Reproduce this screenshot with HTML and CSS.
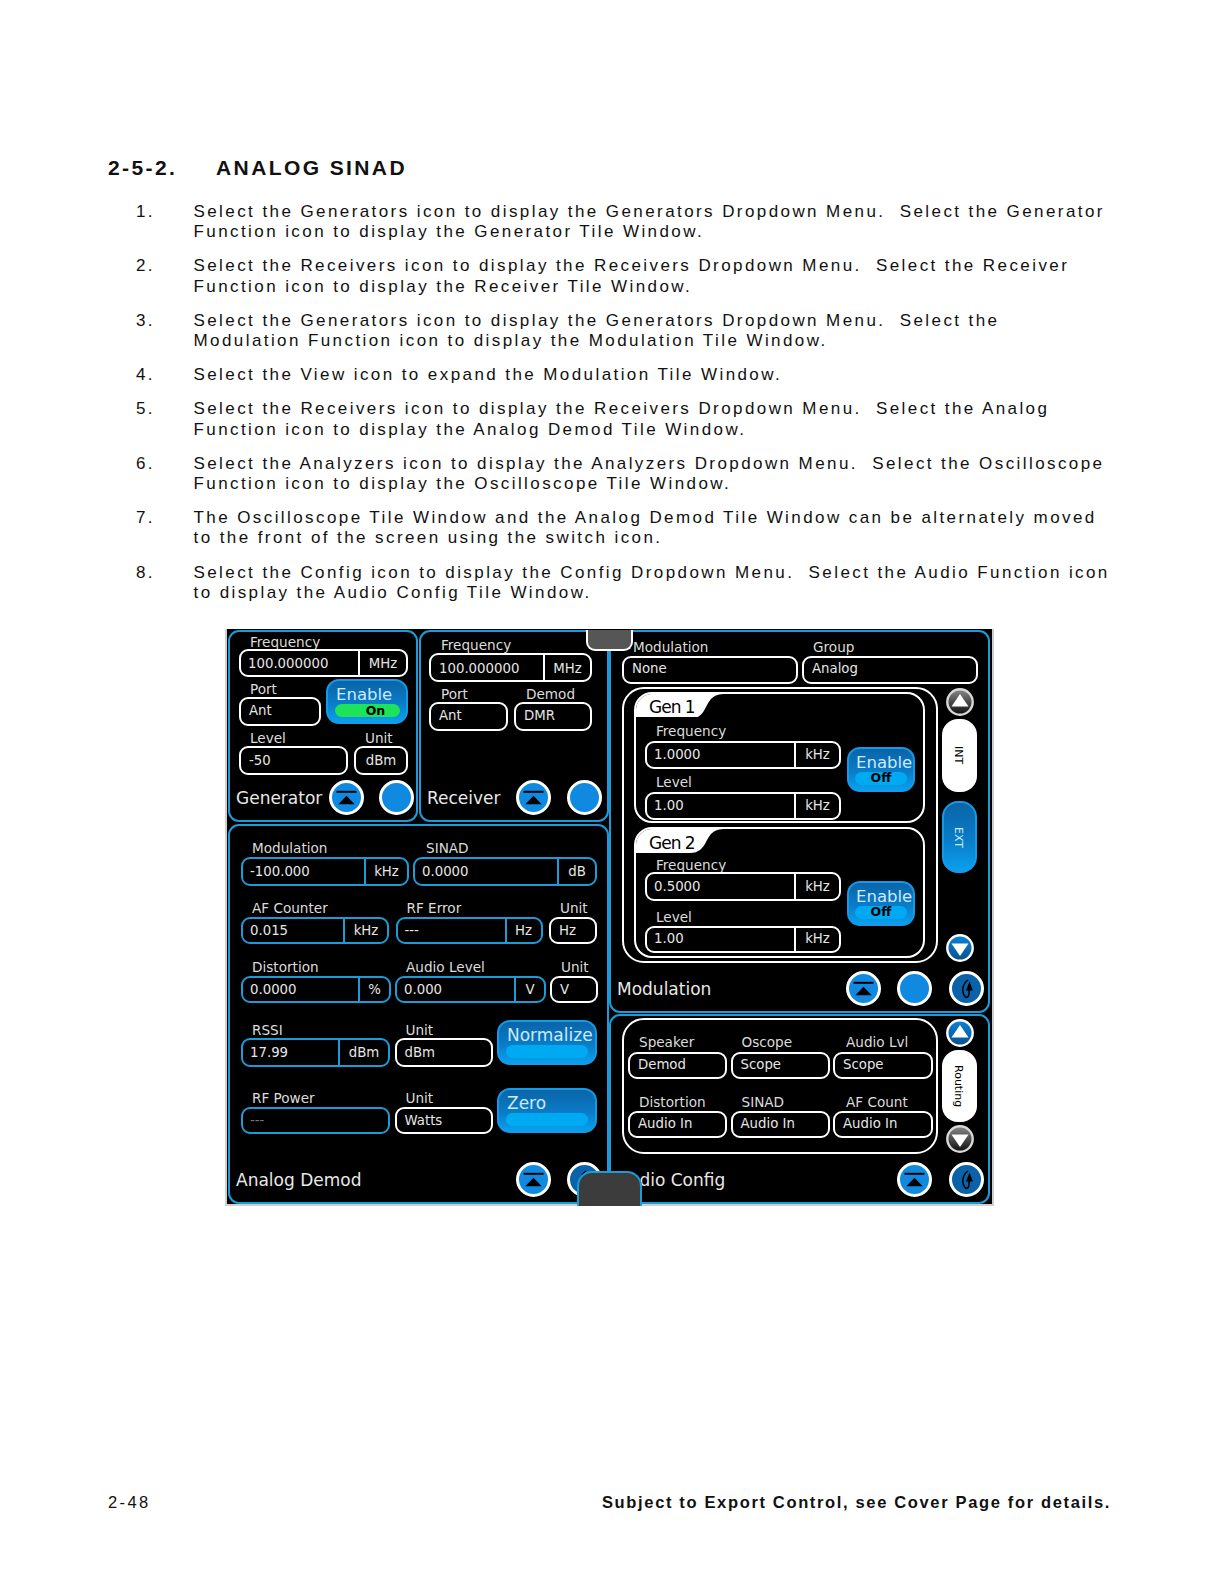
FILE: index.html
```html
<!DOCTYPE html>
<html lang="en">
<head>
<meta charset="utf-8">
<title>Analog SINAD</title>
<link rel="stylesheet" href="styles.css">
</head>
<body>
<svg class="defs" width="0" height="0" aria-hidden="true">
  <defs>
    <linearGradient id="gBlue" x1="0" y1="0" x2="0" y2="1"><stop offset="0" stop-color="#0a84d8"/><stop offset="1" stop-color="#06508c"/></linearGradient>
    <linearGradient id="gGrey" x1="0" y1="0" x2="0" y2="1"><stop offset="0" stop-color="#8a8a8a"/><stop offset="1" stop-color="#0c0c0c"/></linearGradient>
    <symbol id="iTop" viewBox="0 0 35 35"><circle cx="17.5" cy="17.5" r="16" fill="#0f8ae0" stroke="#fff" stroke-width="3"/><path d="M7.500 11.800h20" stroke="#000" stroke-width="2"/><path d="M17.500 15.800L25.700 24.200H9.300z" fill="#000"/></symbol>
    <symbol id="iDot" viewBox="0 0 35 35"><circle cx="17.5" cy="17.5" r="16" fill="#0f8ae0" stroke="#fff" stroke-width="3"/></symbol>
    <symbol id="iSwitch" viewBox="0 0 35 35"><circle cx="17.5" cy="17.5" r="16" fill="#0a62aa" stroke="#fff" stroke-width="3"/><path d="M19 9C13 13 12 22 17 26.500C19.500 26.500 20.500 24 20 19" fill="none" stroke="#000" stroke-width="1.500"/><path d="M20.500 10.500L24 19.500H17z" fill="#000"/></symbol>
    <symbol id="iUpGrey" viewBox="0 0 28 28"><circle cx="14" cy="14" r="12.700" fill="url(#gGrey)" stroke="#d8d8d8" stroke-width="2.400"/><path d="M14 6L22.500 18.500H5.500z" fill="#fff"/></symbol>
    <symbol id="iUpBlue" viewBox="0 0 28 28"><circle cx="14" cy="14" r="12.700" fill="url(#gBlue)" stroke="#fff" stroke-width="2.400"/><path d="M14 6L22.500 18.500H5.500z" fill="#fff"/></symbol>
    <symbol id="iDownGrey" viewBox="0 0 28 28"><circle cx="14" cy="14" r="12.700" fill="url(#gGrey)" stroke="#d8d8d8" stroke-width="2.400"/><path d="M14 22L22.500 9.500H5.500z" fill="#fff"/></symbol>
    <symbol id="iDownBlue" viewBox="0 0 28 28"><circle cx="14" cy="14" r="12.700" fill="url(#gBlue)" stroke="#fff" stroke-width="2.400"/><path d="M14 22L22.500 9.500H5.500z" fill="#fff"/></symbol>
  </defs>
</svg>

<main class="page">
  <h1 class="heading"><span class="heading-num">2-5-2.</span><span>ANALOG SINAD</span></h1>

  <ol class="steps">
    <li class="step"><span class="step-num">1.</span><p>Select the Generators icon to display the Generators Dropdown Menu.&nbsp; Select the Generator<br>Function icon to display the Generator Tile Window.</p></li>
    <li class="step"><span class="step-num">2.</span><p>Select the Receivers icon to display the Receivers Dropdown Menu.&nbsp; Select the Receiver<br>Function icon to display the Receiver Tile Window.</p></li>
    <li class="step"><span class="step-num">3.</span><p>Select the Generators icon to display the Generators Dropdown Menu.&nbsp; Select the<br>Modulation Function icon to display the Modulation Tile Window.</p></li>
    <li class="step"><span class="step-num">4.</span><p>Select the View icon to expand the Modulation Tile Window.</p></li>
    <li class="step"><span class="step-num">5.</span><p>Select the Receivers icon to display the Receivers Dropdown Menu.&nbsp; Select the Analog<br>Function icon to display the Analog Demod Tile Window.</p></li>
    <li class="step"><span class="step-num">6.</span><p>Select the Analyzers icon to display the Analyzers Dropdown Menu.&nbsp; Select the Oscilloscope<br>Function icon to display the Oscilloscope Tile Window.</p></li>
    <li class="step"><span class="step-num">7.</span><p>The Oscilloscope Tile Window and the Analog Demod Tile Window can be alternately moved<br>to the front of the screen using the switch icon.</p></li>
    <li class="step"><span class="step-num">8.</span><p>Select the Config icon to display the Config Dropdown Menu.&nbsp; Select the Audio Function icon<br>to display the Audio Config Tile Window.</p></li>
  </ol>

  <figure class="shot">
    <div class="col-left">
      <div class="col-left-top">
        <!-- Generator -->
        <section class="panel panel-gen">
          <div class="row r-gen-1 g6">
            <div class="fld"><span class="lbl">Frequency</span><div class="box"><span class="v">100.000000</span><span class="u u48">MHz</span></div></div>
          </div>
          <div class="row r-gen-2 g7">
            <div class="fld"><span class="lbl">Port</span><div class="box h29"><span class="v">Ant</span></div></div>
            <div class="btn btn-gen"><span class="btn-t">Enable</span><span class="pill pill-on"><b class="pill-t">On</b></span></div>
          </div>
          <div class="row r-gen-3 g7">
            <div class="fld"><span class="lbl">Level</span><div class="box h29"><span class="v">-50</span></div></div>
            <div class="fld"><span class="lbl">Unit</span><div class="box h29"><span class="c">dBm</span></div></div>
          </div>
          <div class="foot foot-gen">
            <span class="title">Generator</span>
            <svg class="ic"><use href="#iTop"/></svg>
            <svg class="ic ic-gap15"><use href="#iDot"/></svg>
          </div>
        </section>
        <!-- Receiver -->
        <section class="panel panel-rec">
          <div class="row r-rec-1 g7">
            <div class="fld"><span class="lbl">Frequency</span><div class="box h29"><span class="v">100.000000</span><span class="u u47">MHz</span></div></div>
          </div>
          <div class="row r-rec-2 g7">
            <div class="fld"><span class="lbl">Port</span><div class="box h29"><span class="v">Ant</span></div></div>
            <div class="fld"><span class="lbl">Demod</span><div class="box h29"><span class="v">DMR</span></div></div>
          </div>
          <div class="foot foot-rec">
            <span class="title">Receiver</span>
            <svg class="ic"><use href="#iTop"/></svg>
            <svg class="ic ic-gap16"><use href="#iDot"/></svg>
          </div>
        </section>
      </div>
      <!-- Analog Demod -->
      <section class="panel panel-demod">
        <div class="row r-dem-1 g8">
          <div class="fld"><span class="lbl">Modulation</span><div class="box blue h29"><span class="v">-100.000</span><span class="u u43">kHz</span></div></div>
          <div class="fld"><span class="lbl in13">SINAD</span><div class="box blue h29"><span class="v">0.0000</span><span class="u u38">dB</span></div></div>
        </div>
        <div class="row r-dem-2 g8">
          <div class="fld"><span class="lbl">AF Counter</span><div class="box blue h27"><span class="v">0.015</span><span class="u u44">kHz</span></div></div>
          <div class="fld"><span class="lbl">RF Error</span><div class="box blue h27"><span class="v">---</span><span class="u u36">Hz</span></div></div>
          <div class="fld"><span class="lbl">Unit</span><div class="box h27"><span class="v">Hz</span></div></div>
        </div>
        <div class="row r-dem-3 g8">
          <div class="fld"><span class="lbl">Distortion</span><div class="box blue h27"><span class="v">0.0000</span><span class="u u31">%</span></div></div>
          <div class="fld"><span class="lbl">Audio Level</span><div class="box blue h27"><span class="v">0.000</span><span class="u u30">V</span></div></div>
          <div class="fld"><span class="lbl">Unit</span><div class="box h27"><span class="v">V</span></div></div>
        </div>
        <div class="row r-dem-4 g7">
          <div class="fld"><span class="lbl">RSSI</span><div class="box blue h29"><span class="v">17.99</span><span class="u u50">dBm</span></div></div>
          <div class="fld"><span class="lbl">Unit</span><div class="box h29"><span class="v">dBm</span></div></div>
          <div class="btn btn-dem"><span class="btn-t btn-t-lg">Normalize</span><span class="pill pill-off pill-dem"></span></div>
        </div>
        <div class="row r-dem-5 g8">
          <div class="fld"><span class="lbl">RF Power</span><div class="box blue h27"><span class="v dim">---</span></div></div>
          <div class="fld"><span class="lbl">Unit</span><div class="box h27"><span class="v">Watts</span></div></div>
          <div class="btn btn-dem"><span class="btn-t btn-t-lg">Zero</span><span class="pill pill-off pill-dem"></span></div>
        </div>
        <div class="foot foot-demod">
          <span class="title">Analog Demod</span>
          <svg class="ic"><use href="#iTop"/></svg>
          <svg class="ic ic-gap16"><use href="#iSwitch"/></svg>
        </div>
      </section>
    </div>

    <div class="col-right">
      <!-- Modulation -->
      <section class="panel panel-mod">
        <div class="row r-mod-1 g8">
          <div class="fld"><span class="lbl">Modulation</span><div class="box"><span class="v">None</span></div></div>
          <div class="fld"><span class="lbl">Group</span><div class="box"><span class="v">Analog</span></div></div>
        </div>
        <div class="body-mod">
          <div class="frame frame-mod">
            <div class="gen gen-1">
              <div class="gen-tab"><span>Gen 1</span></div>
              <div class="gen-grid">
                <div class="gen-fields">
                  <div class="fld"><span class="lbl">Frequency</span><div class="box"><span class="v">1.0000</span><span class="u u45">kHz</span></div></div>
                  <div class="fld fld-next"><span class="lbl">Level</span><div class="box"><span class="v">1.00</span><span class="u u45">kHz</span></div></div>
                </div>
                <div class="btn btn-mod"><span class="btn-t">Enable</span><span class="pill pill-off pill-mod"><b class="pill-t pill-t-up">Off</b></span></div>
              </div>
            </div>
            <div class="gen gen-2">
              <div class="gen-tab"><span>Gen 2</span></div>
              <div class="gen-grid">
                <div class="gen-fields">
                  <div class="fld g6"><span class="lbl">Frequency</span><div class="box h29"><span class="v">0.5000</span><span class="u u45">kHz</span></div></div>
                  <div class="fld fld-next g8"><span class="lbl">Level</span><div class="box h27"><span class="v">1.00</span><span class="u u45">kHz</span></div></div>
                </div>
                <div class="btn btn-mod"><span class="btn-t">Enable</span><span class="pill pill-off pill-mod"><b class="pill-t pill-t-up">Off</b></span></div>
              </div>
            </div>
          </div>
          <div class="side side-mod">
            <svg class="arrow"><use href="#iUpGrey"/></svg>
            <div class="tabv tabv-on tabv-int"><span>INT</span></div>
            <div class="tabv tabv-off tabv-ext"><span>EXT</span></div>
            <svg class="arrow arrow-end"><use href="#iDownBlue"/></svg>
          </div>
        </div>
        <div class="foot foot-mod">
          <span class="title">Modulation</span>
          <svg class="ic"><use href="#iTop"/></svg>
          <svg class="ic ic-gap16"><use href="#iDot"/></svg>
          <svg class="ic ic-gap17"><use href="#iSwitch"/></svg>
        </div>
      </section>
      <!-- Audio Config -->
      <section class="panel panel-audio">
        <div class="body-audio">
          <div class="frame frame-audio">
            <div class="row r-aud r-aud-1">
              <div class="fld"><span class="lbl">Speaker</span><div class="box h27"><span class="v">Demod</span></div></div>
              <div class="fld"><span class="lbl">Oscope</span><div class="box h27"><span class="v">Scope</span></div></div>
              <div class="fld"><span class="lbl in13">Audio Lvl</span><div class="box h27"><span class="v">Scope</span></div></div>
            </div>
            <div class="row r-aud r-aud-2">
              <div class="fld"><span class="lbl">Distortion</span><div class="box h27"><span class="v">Audio In</span></div></div>
              <div class="fld"><span class="lbl">SINAD</span><div class="box h27"><span class="v">Audio In</span></div></div>
              <div class="fld"><span class="lbl in13">AF Count</span><div class="box h27"><span class="v">Audio In</span></div></div>
            </div>
          </div>
          <div class="side side-audio">
            <svg class="arrow"><use href="#iUpBlue"/></svg>
            <div class="tabv tabv-on tabv-routing"><span>Routing</span></div>
            <svg class="arrow arrow-next"><use href="#iDownGrey"/></svg>
          </div>
        </div>
        <div class="foot foot-audio">
          <span class="title">Audio Config</span>
          <svg class="ic"><use href="#iTop"/></svg>
          <svg class="ic ic-gap17"><use href="#iSwitch"/></svg>
        </div>
      </section>
    </div>

    <div class="handle handle-top"></div>
    <div class="handle handle-bottom"></div>
  </figure>

  <footer class="pagefoot">
    <span class="pagefoot-num">2-48</span>
    <b class="pagefoot-note">Subject to Export Control, see Cover Page for details.</b>
  </footer>
</main>
</body>
</html>
```

FILE: styles.css
```css
* { box-sizing: border-box; }
html, body { margin: 0; padding: 0; background: #fff; }
.defs { position: absolute; }
.page {
  width: 1219px;
  height: 1582px;
  padding: 156px 0 0 107px;
  font-family: "Liberation Sans", Arial, sans-serif;
  color: #111;
}

/* Document text */
.heading {
  display: flex;
  margin: 0 0 0 1px;
  font-size: 21px;
  line-height: 24px;
  letter-spacing: 2.4px;
  font-weight: 700;
}
.heading-num { width: 108px; }
.steps {
  list-style: none;
  margin: 22px 0 0;
  padding: 0 0 0 29px;
  display: flex;
  flex-direction: column;
  gap: 14px;
  font-size: 17px;
  line-height: 20.2px;
  letter-spacing: 2.415px;
}
.step { display: flex; }
.step p { margin: 0; white-space: nowrap; }
.step-num { width: 57.5px; flex: none; }
.pagefoot {
  display: flex;
  justify-content: space-between;
  width: 1003px;
  margin: 286px 0 0 1px;
  font-size: 16.5px;
  line-height: 20px;
  letter-spacing: 2.4px;
}
.pagefoot-note { letter-spacing: 1.65px; }

/* Figure */
.shot {
  position: relative;
  display: grid;
  grid-template-columns: 381px 381px;
  width: 769px;
  height: 577px;
  margin: 26px 0 0 118px;
  padding: 1px 1px 2px;
  background: #000;
  border: solid #cfcfcf;
  border-width: 0 2px 2px 2px;
  font-family: "DejaVu Sans", Verdana, sans-serif;
  color: #e6e6e6;
}
.col-left, .col-right { display: flex; flex-direction: column; }
.col-left-top { display: flex; gap: 1px; }
.col-right { gap: 1px; }

.panel {
  display: flex;
  flex-direction: column;
  border: 2px solid #1c9bd9;
  border-radius: 11px;
  background: #000;
}
.panel-gen, .panel-rec { width: 190px; height: 192px; }
.panel-demod { height: 380px; margin-top: 2px; }
.panel-mod { height: 383px; }
.panel-audio { height: 190px; }

/* Rows */
.row { display: grid; align-items: start; }
.fld { display: flex; flex-direction: column; min-width: 0; }
.lbl {
  height: 16px;
  margin-bottom: 1px;
  padding-left: 11px;
  font-size: 13.6px;
  line-height: 14px;
  white-space: nowrap;
  color: #dcdcdc;
}
.in13 { padding-left: 13px; }
.panel-rec .lbl { padding-left: 12px; }
.g6 .lbl { margin-bottom: -2px; }
.g7 .lbl { margin-bottom: -1px; }
.g8 .lbl { margin-bottom: 0; }

.box {
  --pb: 2px;
  display: flex;
  align-items: center;
  height: 28px;
  padding-bottom: var(--pb);
  border: 2px solid #fff;
  border-radius: 9px;
  font-size: 13.3px;
  white-space: nowrap;
}
.h27 { height: 27px; }
.h29 { height: 29px; }
.blue { border-color: #1c9bd9; --pb: 0px; }
.r-gen-1 .box, .r-gen-3 .box, .panel-demod .box, .gen-2 .g6 .box { --pb: 0px; }
.r-rec-1 .box { --pb: 0px; padding-top: 1px; }
.r-mod-1 .box, .r-aud .box { --pb: 3px; }
.v { flex: 1; padding-left: 7px; }
.box:not(.blue) .v:only-child { padding-left: 8px; }
.c { flex: 1; text-align: center; }
.dim { color: #777; }
.u {
  flex: none;
  align-self: stretch;
  display: flex;
  align-items: center;
  justify-content: center;
  margin-bottom: calc(-1 * var(--pb));
  padding-bottom: var(--pb);
  border-left: 2px solid #fff;
}
.blue .u { border-left-color: #1c9bd9; }
.r-rec-1 .u { margin-top: -1px; padding-top: 1px; }
.r-rec-1 .v { padding-left: 8px; }
.u30 { width: 30px; }
.u31 { width: 31px; }
.u36 { width: 36px; }
.u38 { width: 38px; }
.u43 { width: 43px; }
.u44 { width: 44px; }
.u45 { width: 45px; }
.u47 { width: 47px; }
.u48 { width: 48px; }
.u50 { width: 50px; }

/* Generator */
.r-gen-1 { margin: 3px 0 0 9px; width: 169px; }
.r-gen-2 { margin: 5px 0 0 9px; grid-template-columns: 82px 82px; column-gap: 5px; }
.r-gen-3 { margin: 5px 0 0 9px; grid-template-columns: 109px 54px; column-gap: 6px; }

/* Receiver */
.r-rec-1 { margin: 6px 0 0 8px; width: 163px; }
.r-rec-2 { margin: 5px 0 0 8px; grid-template-columns: 79px 78px; column-gap: 6px; }

/* Analog demod */
.r-dem-1 { margin: 15px 0 0 11px; grid-template-columns: 168px 184px; column-gap: 4px; }
.r-dem-2 { margin: 15px 0 0 11px; grid-template-columns: 148px 147px 48px; column-gap: 6.5px; }
.r-dem-3 { margin: 16px 0 0 11px; grid-template-columns: 150px 151px 48px; column-gap: 4px; }
.r-dem-4 { margin: 20px 0 0 11px; grid-template-columns: 149px 98px 100px; column-gap: 4.5px; }
.r-dem-5 { margin: 24px 0 0 11px; grid-template-columns: 149px 98px 100px; column-gap: 4.5px; }

/* Buttons */
.btn {
  display: flex;
  flex-direction: column;
  position: relative;
  height: 45px;
  border: 2px solid #149ae6;
  border-radius: 13px;
  background: linear-gradient(#0a64a8, #0a7cc8 55%, #0aa0ee);
  color: #cdeafa;
}
.btn-t {
  display: block;
  flex: none;
  height: 21px;
  padding-left: 8px;
  font-size: 16.5px;
  line-height: 28px;
  white-space: nowrap;
}
.btn-t-lg { font-size: 17px; line-height: 26px; }
.pill {
  display: flex;
  flex: none;
  align-items: center;
  justify-content: center;
  height: 13px;
  border-radius: 7px;
}
.pill-on { margin: 2px 6px 0 7px; background: #1de35a; }
.pill-off { background: #00aaf2; }
.pill-t { font-size: 12.5px; line-height: 13px; color: #000; }
.pill-t-up { position: relative; top: -1px; }
.btn-gen { margin-top: -3px; }
.btn-dem { margin-top: -3px; }
.pill-dem { margin: 2px 7px 0; height: 13px; }
.btn-gen .pill-t { margin-left: 16px; }
.btn-mod { width: 68px; margin-top: 30px; }
.btn-mod .btn-t { padding-left: 7px; }
.pill-mod { margin: 2px 6px 0 6px; }

/* Modulation */
.r-mod-1 { margin: 8px 0 0 11px; grid-template-columns: 176px 176px; column-gap: 4px; }
.body-mod { display: flex; margin: 3px 0 0 11px; }
.frame {
  width: 316px;
  border: 2px solid #fff;
  border-radius: 22px;
}
.frame-mod {
  display: flex;
  flex-direction: column;
  gap: 4px;
  height: 276px;
  padding: 3px 0 0 10px;
}
.gen {
  width: 291px;
  height: 131px;
  border: 2px solid #fff;
  border-radius: 18px;
  overflow: hidden;
}
.gen-tab {
  width: 90px;
  height: 23px;
  padding: 2px 0 0 13px;
  background: #fff;
  clip-path: path("M0 0H90C76 0 74 6 70 13C67 19 63 25 54 25H0Z");
  color: #000;
  font-size: 17px;
  line-height: 22px;
  letter-spacing: -1px;
}
.gen-2 .gen-tab { height: 24px; padding-top: 3px; clip-path: path("M0 0H90C76 0 74 6 70 13C67 19 63 24 54 24H0Z"); }
.gen-grid { display: grid; grid-template-columns: 196px 68px; column-gap: 6px; margin-left: 9px; }
.gen-fields { padding-top: 7px; }
.gen-2 .gen-fields { padding-top: 5px; }
.fld-next { margin-top: 6px; }
.gen-2 .fld-next { margin-top: 9px; }
.gen-2 .btn-mod { margin-top: 28px; }

.side {
  display: flex;
  flex-direction: column;
  align-items: center;
  width: 35px;
  margin-left: 4px;
}
.arrow { width: 28px; height: 28px; flex: none; }
.side-mod { padding: 1px 0; }
.side-audio { padding-top: 1px; }
.arrow-end { margin-top: auto; }
.arrow-next { margin-top: 3px; }
.tabv {
  display: flex;
  align-items: center;
  justify-content: center;
  width: 35px;
  padding-right: 2px;
  border-radius: 16px;
  font-size: 11px;
  writing-mode: vertical-rl;
}
.tabv-on { background: #fff; color: #000; }
.tabv-off {
  border: 2px solid #149ae6;
  background: linear-gradient(#0a64a8, #0a7cc8 55%, #0aa0ee);
  color: #cdeafa;
}
.tabv-int { height: 73px; margin-top: 3px; }
.tabv-ext { height: 72px; margin-top: 9px; }
.tabv-routing { height: 72px; margin-top: 3px; }

/* Footers */
.foot { display: flex; align-items: center; height: 35px; padding-right: 4px; }
.title { flex: 1; font-size: 17px; white-space: nowrap; color: #e8e8e8; }
.ic { width: 35px; height: 35px; flex: none; }
.ic-gap15 { margin-left: 15px; }
.ic-gap16 { margin-left: 16px; }
.ic-gap17 { margin-left: 17px; }
.foot-gen { margin-top: 5px; padding: 0 2px 0 6px; }
.foot-rec { margin-top: 49px; padding: 0 5px 0 6px; }
.foot-demod { margin-top: 28px; padding: 0 5px 0 6px; }
.foot-mod { margin-top: 8px; padding-left: 6px; }
.foot-audio { margin-top: 8px; padding-left: 6px; }

/* Audio */
.body-audio { display: flex; margin: 2px 0 0 11px; }
.frame-audio { height: 136px; padding-left: 4px; }
.r-aud { grid-template-columns: 99px 99px 100px; column-gap: 3.5px; }
.r-aud-1 .lbl { margin-bottom: 1px; }
.r-aud-2 .lbl { margin-bottom: 0; }
.r-aud-1 { margin-top: 15px; }
.r-aud-2 { margin-top: 16px; }

/* Overlay handles */
.handle { position: absolute; }
.handle-top {
  left: 359px;
  top: 1px;
  width: 47px;
  height: 21px;
  border: 2px solid #fff;
  border-top: 0;
  border-radius: 0 0 9px 9px;
  background: #565656;
}
.handle-bottom {
  left: 350px;
  bottom: -2px;
  width: 65px;
  height: 35px;
  border: 2px solid #1c9bd9;
  border-bottom: 0;
  border-radius: 15px 15px 0 0;
  background: #3c3c3c;
}
```
